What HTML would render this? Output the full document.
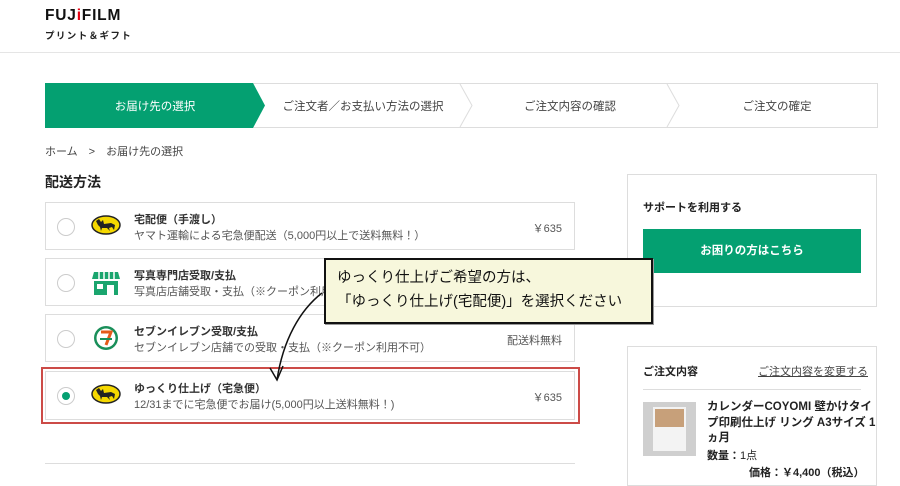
<!DOCTYPE html>
<html><head><meta charset="utf-8"><style>
*{box-sizing:border-box;margin:0;padding:0}
body{width:900px;height:480px;overflow:hidden;background:#fff;font-family:"Liberation Sans","Noto Sans CJK JP",sans-serif;color:#333;position:relative}
.a{position:absolute}
.card{position:absolute;left:45px;width:530px;height:48px;border:1px solid #ddd;background:#fff}
.radio{position:absolute;left:11px;top:15px;width:18px;height:18px;border:1px solid #ccc;border-radius:50%}
.t1{position:absolute;left:88px;top:8px;font-size:11px;font-weight:bold;color:#333;white-space:nowrap}
.t2{position:absolute;left:88px;top:24px;font-size:11px;color:#555;white-space:nowrap}
.pr{position:absolute;right:12px;top:17px;font-size:11px;color:#555}
.ic{position:absolute;left:45px;top:12px}
</style></head><body>
<div class="a" style="left:45px;top:7px;font-size:15.5px;font-weight:900;letter-spacing:0.8px;color:#111">FUJ<span style="color:#e60012">i</span>FILM</div>
<div class="a" style="left:45px;top:28px;font-size:9.5px;font-weight:bold;color:#222;letter-spacing:1.4px">プリント＆ギフト</div>
<div class="a" style="left:0;top:52px;width:900px;height:1px;background:#e5e5e5"></div>

<svg class="a" style="left:45px;top:83px" width="833" height="45">
<rect x="0.5" y="0.5" width="832" height="44" fill="#fff" stroke="#ddd"/>
<polygon points="0,0 208,0 220,22.5 208,45 0,45" fill="#04a071"/>
<polyline points="415,1 427,22.5 415,44" fill="none" stroke="#ddd"/>
<polyline points="622,1 634,22.5 622,44" fill="none" stroke="#ddd"/>
<text x="110" y="27" font-size="11.5" fill="#fff" text-anchor="middle" font-family="Liberation Sans,Noto Sans CJK JP,sans-serif">お届け先の選択</text>
<text x="318" y="27" font-size="11.5" fill="#444" text-anchor="middle" font-family="Liberation Sans,Noto Sans CJK JP,sans-serif">ご注文者／お支払い方法の選択</text>
<text x="525" y="27" font-size="11.5" fill="#444" text-anchor="middle" font-family="Liberation Sans,Noto Sans CJK JP,sans-serif">ご注文内容の確認</text>
<text x="732" y="27" font-size="11.5" fill="#444" text-anchor="middle" font-family="Liberation Sans,Noto Sans CJK JP,sans-serif">ご注文の確定</text>
</svg>

<div class="a" style="left:45px;top:143px;font-size:11px;color:#444">ホーム　&gt;　お届け先の選択</div>
<div class="a" style="left:45px;top:172px;font-size:14px;font-weight:bold;color:#222">配送方法</div>

<div class="card" style="top:202px"><div class="radio"></div>
<svg class="ic" width="30" height="20"><ellipse cx="15" cy="10" rx="14" ry="9" fill="#f5d800" stroke="#222" stroke-width="1.5"/><path d="M5 6 L8 4 L10 7 L12 5 L13 9 L20 8 L24 10 L23 15 L21 12 L18 13 L19 16 L16 13 L11 13 L10 16 L9 12 L7 10Z" fill="#222"/></svg>
<div class="t1">宅配便（手渡し）</div><div class="t2">ヤマト運輸による宅急便配送（5,000円以上で送料無料！）</div><div class="pr">￥635</div></div>

<div class="card" style="top:258px"><div class="radio"></div>
<svg class="ic" style="top:11px" width="30" height="26"><path d="M3 2 H27 L29 9 H1Z" fill="#1aa56e"/><path d="M8 2v7M13 2v7M18 2v7M23 2v7" stroke="#fff" stroke-width="1.5"/><rect x="3" y="11" width="24" height="14" fill="#1aa56e"/><rect x="6" y="14" width="6" height="5" fill="#fff"/><rect x="16" y="15" width="7" height="10" fill="#fff"/></svg>
<div class="t1">写真専門店受取/支払</div><div class="t2">写真店店舗受取・支払（※クーポン利用不可）</div></div>

<div class="card" style="top:314px"><div class="radio"></div>
<svg class="ic" style="top:10px;left:47px" width="26" height="26"><circle cx="13" cy="13" r="12" fill="#1a8f5a"/><circle cx="13" cy="13" r="9.5" fill="#fff"/><path d="M8 7 H18 L13 20" fill="none" stroke="#e55a1a" stroke-width="3"/><rect x="7" y="13" width="12" height="2" fill="#1a8f5a"/></svg>
<div class="t1">セブンイレブン受取/支払</div><div class="t2">セブンイレブン店舗での受取・支払（※クーポン利用不可）</div><div class="pr">配送料無料</div></div>

<div class="card" style="top:371px;height:49px"><div class="radio"><div style="position:absolute;left:4px;top:4px;width:8px;height:8px;border-radius:50%;background:#04a071"></div></div>
<svg class="ic" width="30" height="20"><ellipse cx="15" cy="10" rx="14" ry="9" fill="#f5d800" stroke="#222" stroke-width="1.5"/><path d="M5 6 L8 4 L10 7 L12 5 L13 9 L20 8 L24 10 L23 15 L21 12 L18 13 L19 16 L16 13 L11 13 L10 16 L9 12 L7 10Z" fill="#222"/></svg>
<div class="t1">ゆっくり仕上げ（宅急便）</div><div class="t2">12/31までに宅急便でお届け(5,000円以上送料無料！)</div><div class="pr">￥635</div></div>
<div class="a" style="left:41px;top:367px;width:539px;height:57px;border:2px solid #cc4b47;z-index:5"></div>

<div class="a" style="left:45px;top:463px;width:530px;height:1px;background:#ddd"></div>

<div class="a" style="left:627px;top:174px;width:250px;height:133px;border:1px solid #ddd"></div>
<div class="a" style="left:643px;top:199px;font-size:11px;font-weight:bold;color:#222">サポートを利用する</div>
<div class="a" style="left:643px;top:229px;width:218px;height:44px;background:#04a071;color:#fff;font-size:11.5px;font-weight:bold;text-align:center;line-height:44px">お困りの方はこちら</div>

<div class="a" style="left:627px;top:346px;width:250px;height:140px;border:1px solid #ddd"></div>
<div class="a" style="left:643px;top:363px;font-size:11px;font-weight:bold;color:#222">ご注文内容</div>
<div class="a" style="left:758px;top:363px;font-size:11px;color:#444;text-decoration:underline">ご注文内容を変更する</div>
<div class="a" style="left:643px;top:389px;width:218px;height:1px;background:#ddd"></div>
<div class="a" style="left:643px;top:402px;width:53px;height:54px;background:#cfcfcf"><div style="position:absolute;left:10px;top:5px;width:33px;height:44px;background:#f3f3f3"></div><div style="position:absolute;left:12px;top:7px;width:29px;height:18px;background:#c7a07a"></div></div>
<div class="a" style="left:707px;top:400px;font-size:11.5px;font-weight:bold;color:#222;line-height:15.5px;white-space:nowrap">カレンダーCOYOMI 壁かけタイ<br>プ印刷仕上げ リング A3サイズ 1<br>ヵ月</div>
<div class="a" style="left:707px;top:447px;font-size:11px;color:#222"><b>数量：</b>1点</div>
<div class="a" style="left:749px;top:464px;font-size:11px;font-weight:bold;color:#222">価格：￥4,400（税込）</div>

<div class="a" style="left:324px;top:258px;width:329px;height:66px;background:#f7f7dc;border:2px solid #111;box-shadow:1px 1px 0 #999;z-index:6"></div>
<div class="a" style="left:337px;top:266px;font-size:14.5px;color:#111;line-height:24px;white-space:nowrap;z-index:7">ゆっくり仕上げご希望の方は、<br>「ゆっくり仕上げ(宅配便)」を選択ください</div>
<svg class="a" style="left:0;top:0;z-index:8" width="900" height="480"><path d="M322 293 C300 310 283 340 277 380" fill="none" stroke="#111" stroke-width="1.5"/><path d="M270 368 L277 380 L283 366" fill="none" stroke="#111" stroke-width="1.5"/></svg>
</body></html>
